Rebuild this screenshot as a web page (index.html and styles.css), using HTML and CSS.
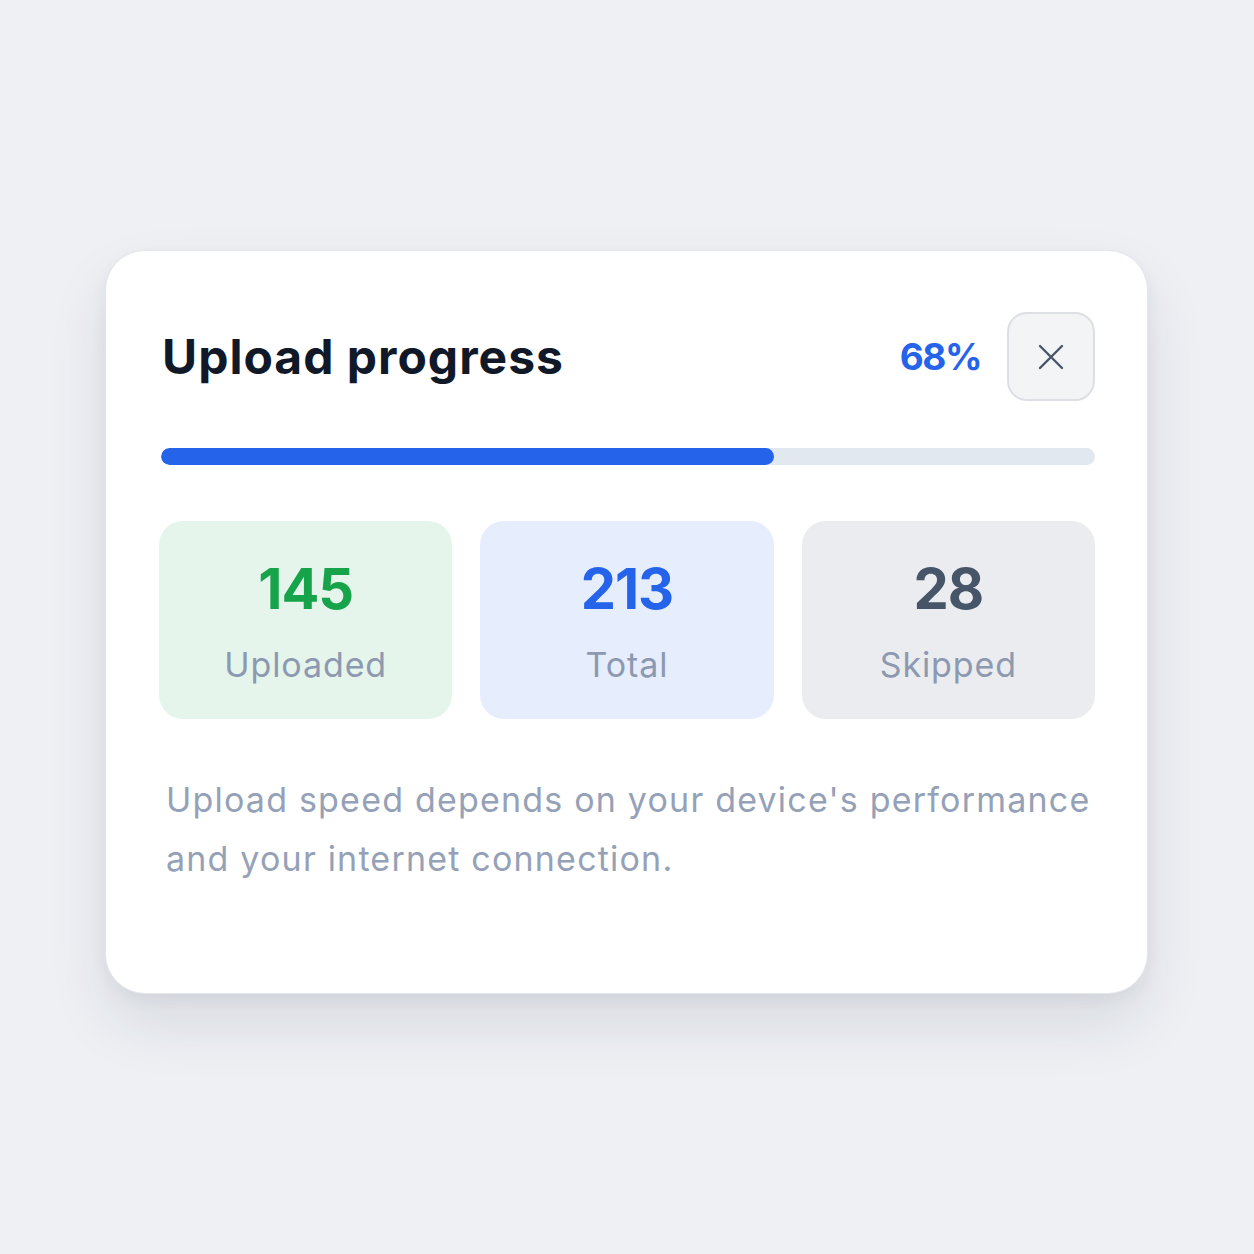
FILE: index.html
```html
<!DOCTYPE html>
<html lang="en">
<head>
<meta charset="utf-8">
<title>Upload progress</title>
<link rel="stylesheet" href="styles.css">
</head>
<body>
<div class="card">
  <div class="header">
    <h1 class="title">Upload progress</h1>
    <div class="header-right">
      <span class="percent">68%</span>
      <button class="close" aria-label="Close">
        <svg width="26" height="26" viewBox="0 0 26 26" fill="none" stroke="#475569" stroke-width="2.4" stroke-linecap="round"><path d="M2 2 L24 24 M24 2 L2 24"/></svg>
      </button>
    </div>
  </div>
  <div class="track"><div class="fill" style="width: 65.6%"></div></div>
  <div class="stats">
    <div class="stat stat-green"><div class="num">145</div><div class="label">Uploaded</div></div>
    <div class="stat stat-blue"><div class="num">213</div><div class="label">Total</div></div>
    <div class="stat stat-gray"><div class="num">28</div><div class="label">Skipped</div></div>
  </div>
  <p class="note">Upload speed depends on your device's performance and your internet connection.</p>
</div>
</body>
</html>
```
FILE: styles.css
```css
* { box-sizing: border-box; }
html, body { margin: 0; padding: 0; }
body {
  background: #eef0f4;
  font-family: Inter, "Liberation Sans", sans-serif;
  min-height: 1254px;
  padding-top: 250px;
}
.card {
  width: 1043px;
  height: 744px;
  margin: 0 0 0 105px;
  background: #ffffff;
  border: 1px solid #e3e7ee;
  border-radius: 40px;
  box-shadow: 0 30px 60px rgba(30, 41, 59, 0.10), 0 6px 16px rgba(30, 41, 59, 0.05);
  padding: 61px 52px 0 54px;
}
.header {
  display: flex;
  align-items: center;
  justify-content: space-between;
  height: 89px;
}
.title {
  margin: 0 0 0 2px;
  font-size: 48px;
  font-weight: 700;
  color: #111827;
  letter-spacing: 1px;
}
.header-right {
  display: flex;
  align-items: center;
  gap: 26px;
}
.percent {
  font-size: 37px;
  font-weight: 700;
  color: #2563eb;
  letter-spacing: -1.5px;
}
.close {
  width: 88px;
  height: 89px;
  border-radius: 20px;
  background: #f3f4f6;
  border: 2px solid #dcdfe4;
  display: flex;
  align-items: center;
  justify-content: center;
  padding: 0;
}
.track {
  margin-top: 47px;
  margin-left: 1px;
  height: 17px;
  background: #e2e8f0;
  border-radius: 9px;
  overflow: hidden;
}
.fill {
  height: 100%;
  background: #2563eb;
  border-radius: 9px;
}
.stats {
  margin-top: 56px;
  display: grid;
  grid-template-columns: repeat(3, 1fr);
  gap: 28px;
  margin-left: -1px;
}
.stat {
  height: 198px;
  border-radius: 24px;
  display: flex;
  flex-direction: column;
  align-items: center;
  padding-top: 36px;
}
.stat-green { background: #e5f5eb; }
.stat-blue { background: #e6edfd; }
.stat-gray { background: #ebecef; }
.num {
  font-size: 56px;
  font-weight: 700;
  line-height: 64px;
  letter-spacing: -1px;
}
.stat-green .num { color: #16a34a; }
.stat-blue .num { color: #2563eb; }
.stat-gray .num { color: #475569; }
.label {
  margin-top: 22px;
  font-size: 34px;
  line-height: 44px;
  color: #8d99b1;
  letter-spacing: 0.9px;
}
.note {
  margin: 51px 0 0 6px;
  font-size: 34px;
  line-height: 59px;
  color: #95a1b7;
  letter-spacing: 1.2px;
}
```
